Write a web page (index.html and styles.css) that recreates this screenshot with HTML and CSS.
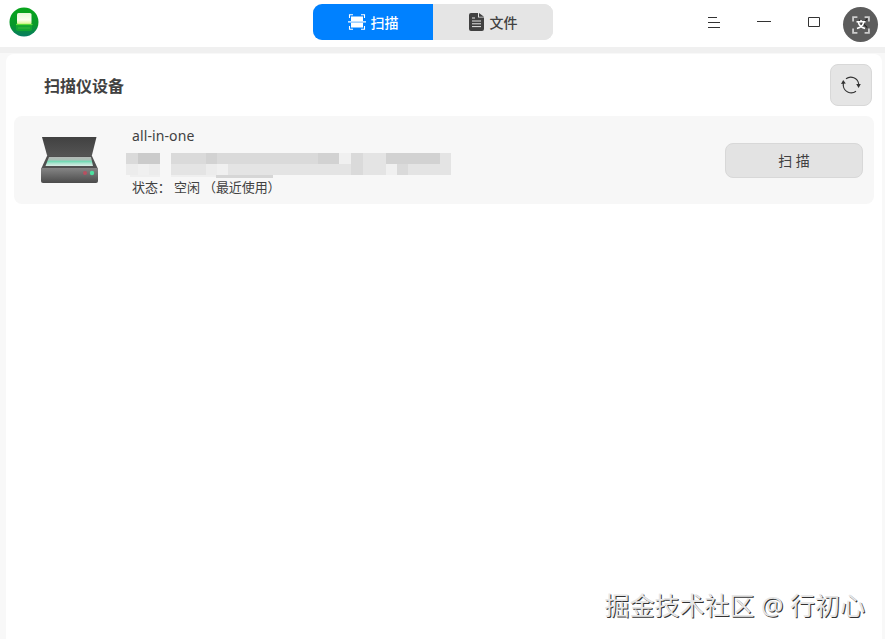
FILE: index.html
```html
<!DOCTYPE html>
<html lang="zh-CN">
<head>
<meta charset="UTF-8">
<meta name="viewport" content="width=device-width, initial-scale=1.0">
<title>扫描</title>
<link rel="stylesheet" href="styles.css">
</head>
<body>
<header class="titlebar">
<svg class="logo" viewBox="0 0 30 30">
<defs>
<linearGradient id="logo-bg" x1="0" y1="0" x2="0" y2="1"><stop offset="0" stop-color="#08a51c"/><stop offset=".6" stop-color="#08982a"/><stop offset="1" stop-color="#087c63"/></linearGradient>
<linearGradient id="logo-page" x1="0" y1="0" x2="0" y2="1"><stop offset="0" stop-color="#e6f8d8"/><stop offset=".6" stop-color="#fbfff0"/><stop offset="1" stop-color="#d5f582"/></linearGradient>
</defs>
<circle cx="15" cy="15" r="14.5" fill="url(#logo-bg)"/>
<rect x="7" y="16" width="16" height="8" rx="2" fill="#12a632"/>
<rect x="8" y="6" width="14.500" height="11.500" rx="1.5" fill="url(#logo-page)"/>
<path d="M7 17.500h16.500" stroke="#5bdc38" stroke-width="1.2"/>
<path d="M9 21h12" stroke="#39b83a"/>
</svg>
<nav class="tabs">
<button class="tab active">
<svg width="18" height="16" viewBox="0 0 18 16">
<path d="M1.500 4V.7H5M13 .7h3.500V4M1.500 12v3.300H5M13 15.300h3.500V12M0 7.900h18" fill="none" stroke="#fff" stroke-width="1.1"/>
<path d="M3 2.500h12V7H3zM3 8.700h12v4.800H3z" fill="#fff"/>
</svg>
扫描</button>
<button class="tab">
<svg width="15" height="18" viewBox="0 0 15 18">
<path d="M2 0h7v4.500h6V16a2 2 0 0 1-2 2H2a2 2 0 0 1-2-2V2a2 2 0 0 1 2-2z" fill="#404040"/>
<path d="M10 0l5 3.700h-5z" fill="#404040"/>
<path d="M3 5h3M3 8h9M3 10.800h9M3 13.600h9" stroke="#e5e5e5"/>
</svg>
文件</button>
</nav>
<div class="window-buttons">
<svg width="12" height="11" viewBox="0 0 12 11"><path d="M0 .5h9M0 5.500h12M0 10.500h12" stroke="#333"/></svg>
<svg width="14" height="11" viewBox="0 0 14 11"><path d="M0 4.500h14" stroke="#333"/></svg>
<svg width="12" height="11" viewBox="0 0 12 11"><path d="M.5 .5h11v9H.5z" fill="none" stroke="#333"/></svg>
</div>
</header>
<div class="translate">
<svg width="18" height="18" viewBox="0 0 20 20">
<path d="M8 4l9 9M17 3l-7 7" stroke="#222" stroke-width="1.200"/>
<path d="M1.200 6V1.200H6M14 1.200h4.800V6M1.200 14v4.800H6M14 18.800h4.800V14" fill="none" stroke="#ccc" stroke-width="2"/>
<path d="M5 6.500h10M10 4.500v2M7 7c1 4 4 6 7.500 7M13 7c-1 4-4 6-7.500 7" fill="none" stroke="#fff" stroke-width="1.700"/>
</svg>
</div>
<main class="panel">
<div class="panel-head">
<h2>扫描仪设备</h2>
<button class="refresh">
<svg width="20" height="18" viewBox="0 0 20 18">
<path d="M5 2.800A8 8 0 0 1 17.700 8M15 15.200A8 8 0 0 1 2.300 10" fill="none" stroke="#333" stroke-width="1.100"/>
<path d="M2.300 10V7" stroke="#333" stroke-width="1.200"/>
<path d="M0 8l2.200-4 2.600 3.500zM15.200 8h4.600l-2.200 4z" fill="#333"/>
</svg>
</button>
</div>
<div class="device">
<svg class="scanner" width="58" height="50" viewBox="0 0 58 50">
<defs>
<linearGradient id="body" x1="0" y1="0" x2="0" y2="1"><stop offset="0" stop-color="#858585"/><stop offset="1" stop-color="#4b4b4b"/></linearGradient>
<linearGradient id="lid" x1="0" y1="0" x2="0" y2="1"><stop offset="0" stop-color="#414141"/><stop offset="1" stop-color="#555"/></linearGradient>
<linearGradient id="glass" x1="0" y1="0" x2="0" y2="1"><stop offset="0" stop-color="#b5bab8"/><stop offset=".3" stop-color="#aabfb6"/><stop offset=".5" stop-color="#75dab5"/><stop offset=".7" stop-color="#a8e3cd"/><stop offset="1" stop-color="#dcebe5"/></linearGradient>
</defs>
<path d="M1 1h54.500l-5 20h-44z" fill="url(#lid)"/>
<path d="M6 20h45l5.500 12H.5z" fill="#505050"/>
<path d="M8 21h42l2 9H4.500z" fill="url(#glass)"/>
<path d="M0 32h57v13a2 2 0 0 1-2 2H2a2 2 0 0 1-2-2z" fill="url(#body)"/>
<circle cx="44" cy="37" r="2" fill="#b94f60"/>
<circle cx="51" cy="37" r="2.200" fill="#4ce0a0"/>
</svg>
<div class="info">
<div class="name">all-in-one</div>
<svg class="mosaic" width="325" height="25" viewBox="0 0 325 25" shape-rendering="crispEdges">
<path d="M0 0h34v22H0zM45 0h280v22H45z" fill="#e4e4e4"/>
<path d="M12 0h22v11H12z" fill="#cbcbcb"/>
<path d="M80 0h11v11H80zM192 0h21v11h-21zM260 0h54v11h-54z" fill="#d2d2d2"/>
<path d="M0 0h12v11H0zM45 0h35v11H45zM91 0h101v11H91zM225 0h12v22h-12zM271 11h11v11h-11z" fill="#dadada"/>
<path d="M0 11h34v11H0zM80 11h11v11H80z" fill="#ececec"/>
<path d="M12 11h11v11H12zM91 11h11v11H91zM213 0h12v11h-12zM260 11h11v11h-11z" fill="#f0f0f0"/>
<path d="M90 22h57v3H90z" fill="#d6d6d6"/>
<path d="M4 22h30v2H4zM45 22h45v2H45z" fill="#efefef"/>
</svg>
<div class="status">状态： 空闲 （最近使用）</div>
</div>
<button class="scan">扫 描</button>
</div>
</main>
<div class="watermark">掘金技术社区 @ 行初心</div>
</body>
</html>
```
FILE: styles.css
```css
* {
box-sizing: border-box;
}
body {
margin: 0;
height: 639px;
overflow: hidden;
display: flex;
flex-direction: column;
background: #f8f8f8;
color: #414141;
font-family: "Noto Sans", "Noto Sans CJK SC", sans-serif;
font-size: 14px;
}
button {
padding: 0;
border: none;
color: inherit;
font: inherit;
}
svg {
display: block;
flex: none;
}
.titlebar {
display: grid;
grid-template-columns: 304px 240px 1fr;
height: 53px;
flex: none;
padding: 4px 0 0 9px;
background: #fff;
border-bottom: 6px solid #f0f0f0;
}
.logo {
width: 30px;
height: 30px;
margin-top: 3px;
}
.tabs {
display: flex;
height: 36px;
width: 240px;
border-radius: 9px;
overflow: hidden;
background: #e5e5e5;
}
.tab {
display: flex;
align-items: center;
justify-content: center;
gap: 6px;
width: 120px;
padding-bottom: 1px;
background: #e5e5e5;
font-weight: 500;
}
.tab.active {
gap: 5px;
background: #0081ff;
color: #fff;
}
.window-buttons {
display: flex;
justify-content: flex-end;
gap: 37px;
padding: 13px 65px 0 0;
}
.translate {
position: absolute;
top: 7px;
right: 7px;
width: 35px;
height: 35px;
display: grid;
place-items: center;
border-radius: 50%;
background: #5c5c5c;
}
.panel {
flex: 1;
margin: 1px 3px 0 6px;
padding: 10px 8px 0;
background: #fff;
border-radius: 8px 8px 0 0;
}
.panel-head {
display: flex;
justify-content: space-between;
height: 52px;
padding: 0 2px 0 30px;
}
h2 {
margin: 10px 0 0;
font-size: 16px;
line-height: 24px;
font-weight: 700;
}
.refresh {
display: grid;
place-items: center;
width: 42px;
height: 42px;
border: 1px solid #d8d8d8;
border-radius: 8px;
background: #e5e5e5;
}
.device {
display: flex;
height: 88px;
padding: 0 11px 0 27px;
background: #f7f7f7;
border-radius: 8px;
}
.scanner {
margin-top: 20px;
}
.info {
flex: 1;
padding: 9px 0 0 33px;
}
.name {
height: 28px;
line-height: 22px;
letter-spacing: .1px;
}
.mosaic {
margin-left: -6px;
}
.status {
font-size: 13px;
line-height: 18px;
letter-spacing: -.1px;
white-space: pre;
}
.scan {
width: 138px;
height: 35px;
margin-top: 27px;
padding-bottom: 2px;
border: 1px solid #d8d8d8;
border-radius: 8px;
background: #e3e3e3;
}
.watermark {
position: absolute;
right: 20px;
bottom: 15px;
color: #e6e6e6;
font-size: 25px;
line-height: 38px;
white-space: nowrap;
text-shadow: 1px 1px 0 #333;
}
```
